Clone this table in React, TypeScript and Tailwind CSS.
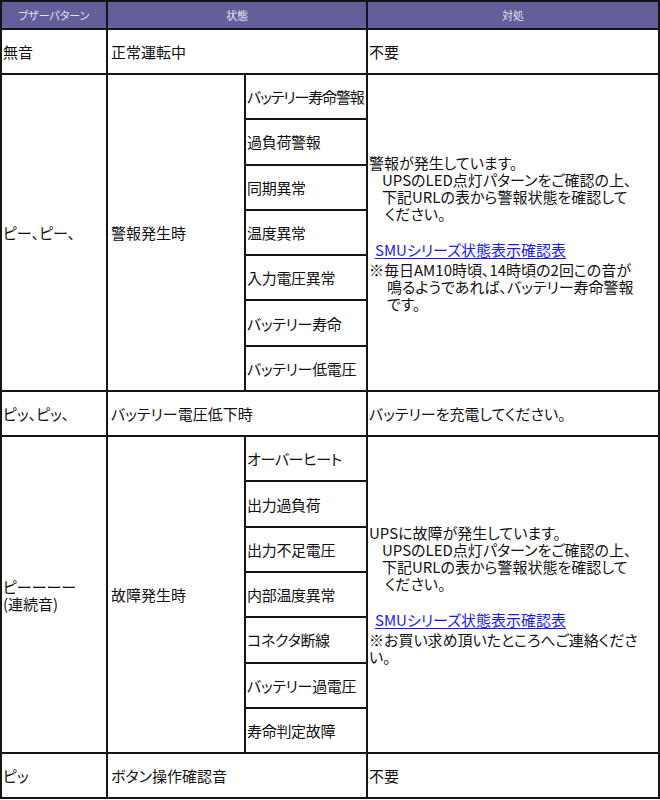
import React from 'react';

interface SubItem {
  label: string;
  tight?: boolean;
}

const warningItems: SubItem[] = [
  { label: 'バッテリー寿命警報', tight: true },
  { label: '過負荷警報' },
  { label: '同期異常' },
  { label: '温度異常' },
  { label: '入力電圧異常' },
  { label: 'バッテリー寿命' },
  { label: 'バッテリー低電圧' },
];

const faultItems: SubItem[] = [
  { label: 'オーバーヒート' },
  { label: '出力過負荷' },
  { label: '出力不足電圧' },
  { label: '内部温度異常' },
  { label: 'コネクタ断線' },
  { label: 'バッテリー過電圧' },
  { label: '寿命判定故障' },
];

const cell = 'border-2 border-[#151515] align-middle px-[1px] text-left';
const subRow = 'h-[45.3px]';

const StatusLink: React.FC = () => (
  <a href="#" className="block pl-[6px] mt-[19px] mb-[3px] text-[#1a1aee] underline underline-offset-2">
    SMUシリーズ状態表示確認表
  </a>
);

const SubCell: React.FC<{ item: SubItem }> = ({ item }) => (
  <td className={`${cell} whitespace-nowrap ${item.tight ? 'tracking-[-1.1px]' : 'tracking-[-0.3px]'}`}>
    {item.label}
  </td>
);

export default function App() {
  return (
    <div
      className="w-[660px] h-[800px] bg-white text-[15px] leading-[17px] text-[#111] [font-feature-settings:'palt']"
      style={{ fontFamily: '"Noto Sans CJK JP", "Noto Sans", sans-serif' }}
    >
      <table className="w-[658px] table-fixed border-collapse">
        <colgroup>
          <col className="w-[106px]" />
          <col className="w-[138px]" />
          <col className="w-[122px]" />
          <col className="w-[292px]" />
        </colgroup>
        <thead>
          <tr className="h-[28px] bg-[#635f9b] text-[11px] text-[#e4e3f2]">
            <th className="border-2 border-[#151515] font-normal">ブザーパターン</th>
            <th colSpan={2} className="border-2 border-[#151515] font-normal">
              状態
            </th>
            <th className="border-2 border-[#151515] font-normal">対処</th>
          </tr>
        </thead>
        <tbody>
          <tr className="h-[45px]">
            <td className={cell}>無音</td>
            <td colSpan={2} className={`${cell} pl-[3px]`}>
              正常運転中
            </td>
            <td className={cell}>不要</td>
          </tr>

          {warningItems.map((item, i) => (
            <tr key={item.label} className={subRow}>
              {i === 0 && (
                <>
                  <td rowSpan={7} className={cell}>
                    ピー、ピー、
                  </td>
                  <td rowSpan={7} className={`${cell} pl-[3px]`}>
                    警報発生時
                  </td>
                </>
              )}
              <SubCell item={item} />
              {i === 0 && (
                <td rowSpan={7} className={cell}>
                  <div>警報が発生しています。</div>
                  <div className="pl-[13px]">UPSのLED点灯パターンをご確認の上、</div>
                  <div className="pl-[13px]">下記URLの表から警報状態を確認して</div>
                  <div className="pl-[16px]">ください。</div>
                  <StatusLink />
                  <div>※毎日AM10時頃、14時頃の2回この音が</div>
                  <div className="pl-[18px]">鳴るようであれば、バッテリー寿命警報</div>
                  <div className="pl-[18px]">です。</div>
                </td>
              )}
            </tr>
          ))}

          <tr className="h-[45px]">
            <td className={cell}>ピッ、ピッ、</td>
            <td colSpan={2} className={`${cell} pl-[3px]`}>
              バッテリー電圧低下時
            </td>
            <td className={cell}>バッテリーを充電してください。</td>
          </tr>

          {faultItems.map((item, i) => (
            <tr key={item.label} className={subRow}>
              {i === 0 && (
                <>
                  <td rowSpan={7} className={cell}>
                    <div>ピーーーー</div>
                    <div>(連続音)</div>
                  </td>
                  <td rowSpan={7} className={`${cell} pl-[3px]`}>
                    故障発生時
                  </td>
                </>
              )}
              <SubCell item={item} />
              {i === 0 && (
                <td rowSpan={7} className={cell}>
                  <div>UPSに故障が発生しています。</div>
                  <div className="pl-[13px]">UPSのLED点灯パターンをご確認の上、</div>
                  <div className="pl-[13px]">下記URLの表から警報状態を確認して</div>
                  <div className="pl-[16px]">ください。</div>
                  <StatusLink />
                  <div>※お買い求め頂いたところへご連絡くださ</div>
                  <div>い。</div>
                </td>
              )}
            </tr>
          ))}

          <tr className="h-[45px]">
            <td className={cell}>ピッ</td>
            <td colSpan={2} className={`${cell} pl-[3px]`}>
              ボタン操作確認音
            </td>
            <td className={cell}>不要</td>
          </tr>
        </tbody>
      </table>
    </div>
  );
}
